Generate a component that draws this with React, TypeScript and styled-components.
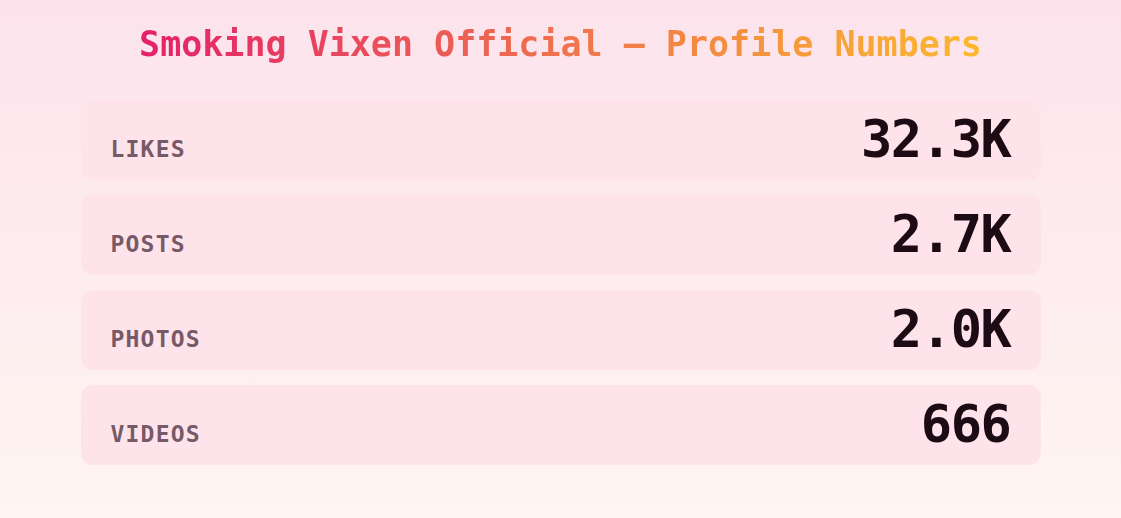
import styled, { createGlobalStyle } from "styled-components";

const GlobalStyle = createGlobalStyle`
  html, body {
    margin: 0;
    padding: 0;
  }
  body {
    min-height: 518px;
    background: linear-gradient(180deg, #fce3ec 0%, #fff5f1 100%);
    font-family: "DejaVu Sans Mono", "Liberation Mono", monospace;
  }
`;

const Page = styled.div`
  display: flex;
  flex-direction: column;
  align-items: center;
  padding-top: 23px;
`;

const Title = styled.h1`
  margin: 0 0 35px;
  font-size: 35px;
  line-height: 42px;
  font-weight: 700;
  background: linear-gradient(90deg, #e3206b 0%, #f07a4a 55%, #fbb92e 100%);
  -webkit-background-clip: text;
  background-clip: text;
  color: transparent;
`;

const List = styled.div`
  display: flex;
  flex-direction: column;
  gap: 15px;
  width: 960px;
`;

const Row = styled.div`
  display: flex;
  justify-content: space-between;
  align-items: baseline;
  box-sizing: border-box;
  height: 80px;
  padding: 13px 30px 0 30px;
  border-radius: 12px;
  background: #ffe3ea;
`;

const Label = styled.span`
  font-size: 23px;
  font-weight: 700;
  letter-spacing: 1.2px;
  text-transform: uppercase;
  color: #765a68;
`;

const Value = styled.span`
  font-size: 52px;
  line-height: 52px;
  font-weight: 700;
  letter-spacing: -1.4px;
  color: #1c0a15;
`;

const stats = [
  { label: "Likes", value: "32.3K" },
  { label: "Posts", value: "2.7K" },
  { label: "Photos", value: "2.0K" },
  { label: "Videos", value: "666" },
];

export default function App() {
  return (
    <>
      <GlobalStyle />
      <Page>
        <Title>Smoking Vixen Official — Profile Numbers</Title>
        <List>
          {stats.map((s) => (
            <Row key={s.label}>
              <Label>{s.label}</Label>
              <Value>{s.value}</Value>
            </Row>
          ))}
        </List>
      </Page>
    </>
  );
}
